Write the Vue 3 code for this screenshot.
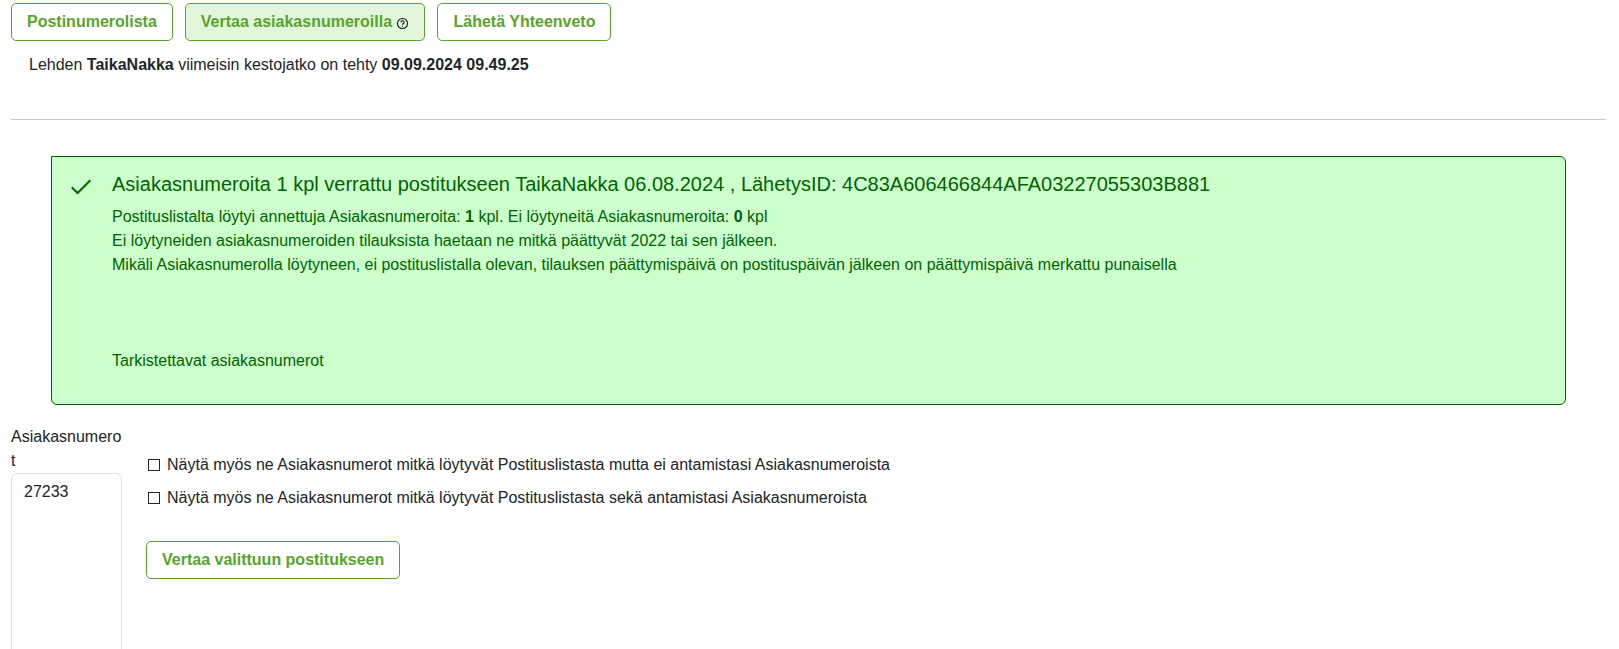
<script setup>
import { ref } from 'vue'

const customerNumbers = ref('27233')
const options = ref([
  {
    id: 'show-missing',
    label: 'Näytä myös ne Asiakasnumerot mitkä löytyvät Postituslistasta mutta ei antamistasi Asiakasnumeroista',
    checked: false,
  },
  {
    id: 'show-both',
    label: 'Näytä myös ne Asiakasnumerot mitkä löytyvät Postituslistasta sekä antamistasi Asiakasnumeroista',
    checked: false,
  },
])
</script>

<template>
  <main class="page">
    <nav class="toolbar">
      <button type="button" class="btn">Postinumerolista</button>
      <button type="button" class="btn active">
        Vertaa asiakasnumeroilla
        <svg class="help" viewBox="0 0 12 12" aria-hidden="true">
          <circle cx="6" cy="6" r="4.6" />
          <path d="M4.5 4.9a1.5 1.4 0 1 1 2.3 1.1C6.2 6.4 6 6.6 6 7.2M6 8.1v1" />
        </svg>
      </button>
      <button type="button" class="btn">Lähetä Yhteenveto</button>
    </nav>

    <p class="status">
      Lehden <b>TaikaNakka</b> viimeisin kestojatko on tehty <b>09.09.2024 09.49.25</b>
    </p>

    <hr class="divider" />

    <section class="alert" role="status">
      <svg class="check" viewBox="0 0 24 24" aria-hidden="true">
        <path d="M2.7 12.3 8.6 18 21.3 5.3" />
      </svg>
      <div class="alert-body">
        <h1>Asiakasnumeroita 1 kpl verrattu postitukseen TaikaNakka 06.08.2024 , LähetysID: 4C83A606466844AFA03227055303B881</h1>
        <p>Postituslistalta löytyi annettuja Asiakasnumeroita: <b>1</b> kpl. Ei löytyneitä Asiakasnumeroita: <b>0</b> kpl</p>
        <p>Ei löytyneiden asiakasnumeroiden tilauksista haetaan ne mitkä päättyvät 2022 tai sen jälkeen.</p>
        <p>Mikäli Asiakasnumerolla löytyneen, ei postituslistalla olevan, tilauksen päättymispäivä on postituspäivän jälkeen on päättymispäivä merkattu punaisella</p>
        <p class="review">Tarkistettavat asiakasnumerot</p>
      </div>
    </section>

    <form class="compare" @submit.prevent>
      <div class="numbers">
        <label for="numbers">Asiakasnumerot</label>
        <textarea id="numbers" v-model="customerNumbers" rows="10"></textarea>
      </div>
      <div class="options">
        <div v-for="option in options" :key="option.id" class="option">
          <input :id="option.id" v-model="option.checked" type="checkbox" />
          <label :for="option.id">{{ option.label }}</label>
        </div>
        <button type="submit" class="btn submit">Vertaa valittuun postitukseen</button>
      </div>
    </form>
  </main>
</template>

<style>
body {
  margin: 0;
  background: #fff;
}
</style>

<style scoped>
.page {
  box-sizing: border-box;
  height: 100vh;
  overflow: hidden;
  padding: 3px 13px 0 11px;
  font-family: "Liberation Sans", Arial, sans-serif;
  font-size: 16px;
  line-height: 24px;
  color: #212529;
}
.toolbar {
  display: flex;
  gap: 12px;
}
.btn {
  box-sizing: border-box;
  height: 38px;
  padding: 0 15px;
  border: 1px solid #58a42b;
  border-radius: 5px;
  background: #fff;
  color: #58a42b;
  font: inherit;
  font-weight: 700;
  white-space: nowrap;
  cursor: pointer;
}
.btn.active {
  background: #e2f6dc;
}
.help {
  width: 13px;
  height: 13px;
  vertical-align: -3px;
  fill: none;
  stroke: #111;
  stroke-width: 1;
}
.status {
  margin: 12px 18px 0;
}
.divider {
  height: 1px;
  margin: 42px 0 36px;
  border: 0;
  background: #c8c8c8;
}
.alert {
  display: flex;
  gap: 19px;
  margin: 0 40px;
  padding: 12px 20px 31px 17px;
  border: 1px solid #006400;
  border-radius: 0 6px 6px 6px;
  background: #cfc;
  color: #006400;
}
.check {
  flex: none;
  width: 24px;
  height: 24px;
  margin-top: 6px;
  fill: none;
  stroke: #006400;
  stroke-width: 2;
}
.alert h1 {
  margin: 0 0 6px;
  font-size: 20px;
  font-weight: 400;
  line-height: 30px;
}
.alert p {
  margin: 0;
}
.alert .review {
  margin-top: 72px;
}
.compare {
  display: flex;
  gap: 24px;
  margin-top: 20px;
}
.numbers {
  flex: none;
  width: 111px;
}
.numbers label {
  display: block;
  overflow-wrap: anywhere;
}
.numbers textarea {
  display: block;
  box-sizing: border-box;
  width: 100%;
  padding: 6px 12px;
  border: 1px solid #dee2e6;
  border-radius: 6px;
  background: #fff;
  color: inherit;
  font: inherit;
  resize: none;
}
.options {
  padding-top: 28px;
}
.option {
  display: flex;
  align-items: center;
  gap: 7px;
  margin: 0 0 9px 2px;
}
.option input {
  appearance: none;
  width: 12px;
  height: 12px;
  margin: 0;
  border: 1px solid #212529;
  background: #fff;
}
.option input:checked {
  background: #58a42b;
}
.submit {
  margin-top: 22px;
}
</style>
